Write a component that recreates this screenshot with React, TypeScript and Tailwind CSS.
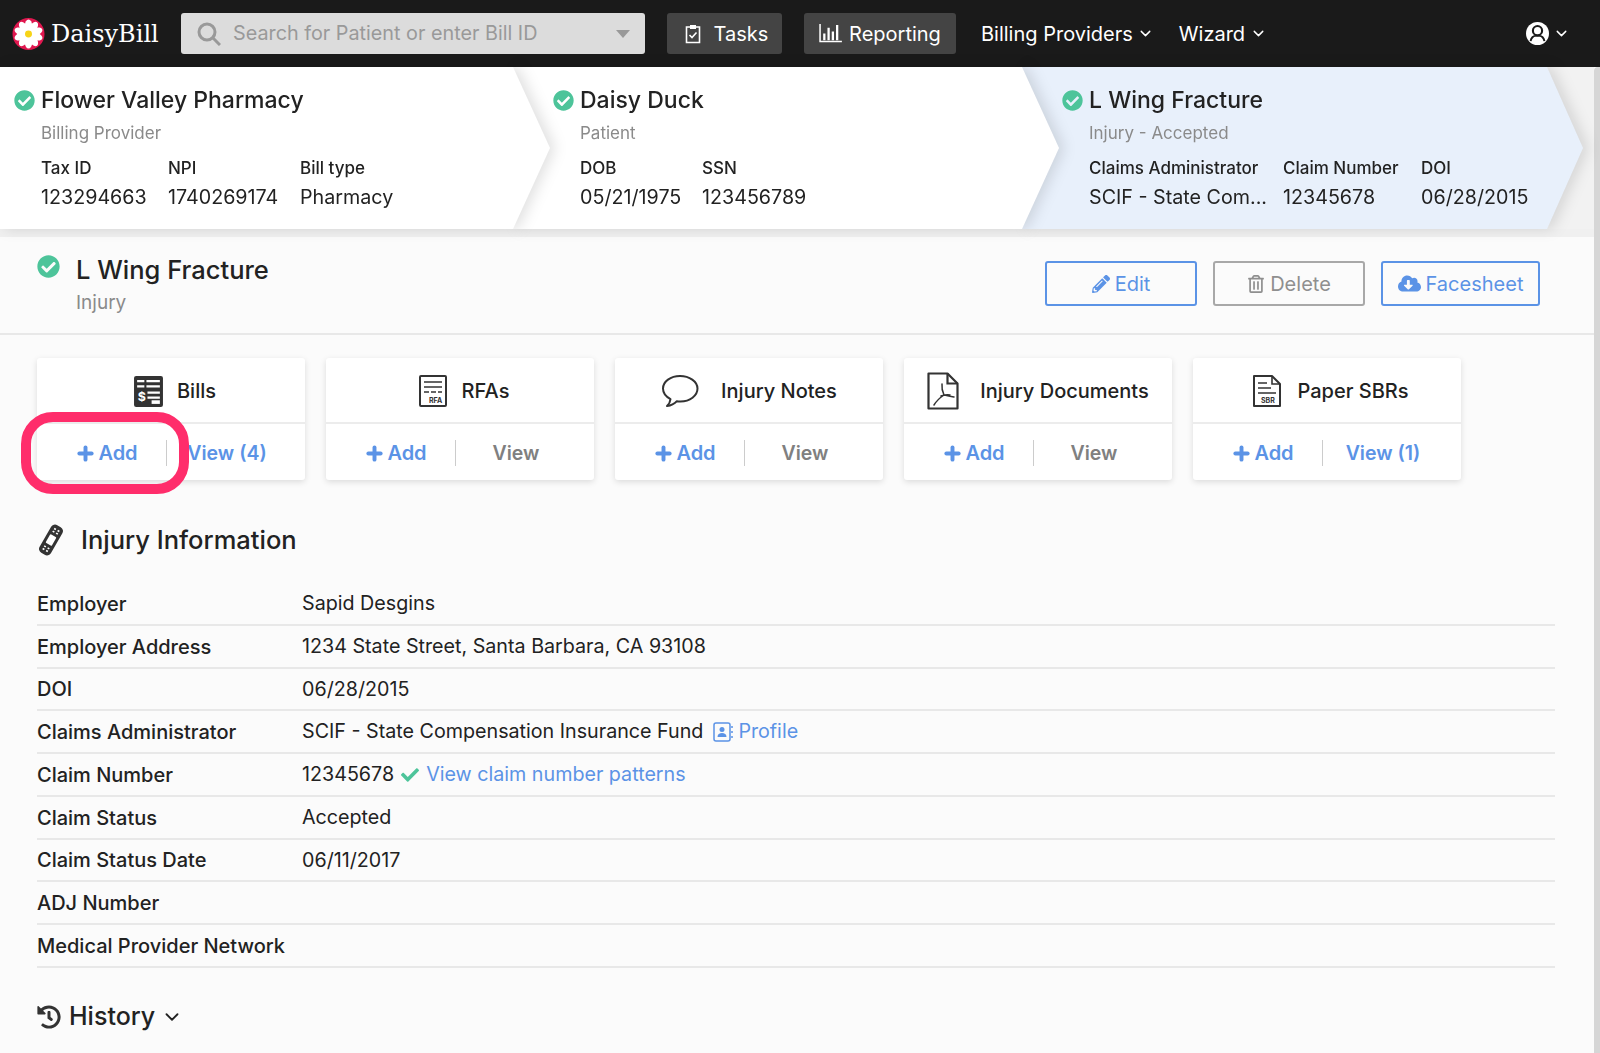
import { ChevronDown, Plus } from 'lucide-react';
import { FaCheckCircle, FaCheck, FaPencilAlt, FaCloudDownloadAlt, FaRegTrashAlt, FaHistory } from 'react-icons/fa';
import { ReactNode } from 'react';

function Daisy() {
  const petals = [0, 36, 72, 108, 144, 180, 216, 252, 288, 324];
  return (
    <svg viewBox="0 0 34 34" className="h-[34px] w-[33px]">
      <circle cx="17" cy="17" r="16.5" fill="#e0174f" />
      {petals.map((a) => (
        <ellipse key={a} cx="17" cy="8.5" rx="3.8" ry="6.5" fill="#fff" transform={`rotate(${a} 17 17)`} />
      ))}
      <circle cx="17" cy="17" r="3.6" fill="#f7d417" />
    </svg>
  );
}

function BillsIcon() {
  return (
    <svg viewBox="0 0 28 30" className="h-[31px] w-[29px]">
      <rect width="28" height="30" rx="2" fill="#333" />
      <path d="M3 5h7M12 5h13M3 10h7M12 10h13M13 16h12M13 21h12" stroke="#fff" strokeWidth="2.2" />
      <rect x="17" y="23.500" width="8" height="3.500" fill="#fff" />
      <text x="3.500" y="24" fontSize="12" fontWeight="700" fill="#fff" fontFamily="Inter, sans-serif">$</text>
    </svg>
  );
}

function RfaIcon() {
  return (
    <svg viewBox="0 0 28 32" className="h-[32px] w-[28px]" fill="none">
      <rect x="1" y="1" width="26" height="30" rx="1" stroke="#333" strokeWidth="2" />
      <path d="M5 7h18M5 12h18" stroke="#333" strokeWidth="1.6" />
      <path d="M5 17h5M12 17h5M19 17h4" stroke="#333" strokeWidth="1.6" />
      <text x="10" y="28" fontSize="7" fontWeight="700" fill="#333" fontFamily="Inter, sans-serif">RFA</text>
    </svg>
  );
}

function NoteIcon() {
  return (
    <svg viewBox="0 0 38 34" className="h-[34px] w-[38px]" fill="none">
      <path d="M19 2C9.6 2 2 7.6 2 14.6c0 4.4 3 8.2 7.500 10.500-.3 2.500-1.300 5-3.500 7 3.800-.6 7.400-2.300 9.800-4.800 1.200.2 2.400.3 3.700.3 9.400 0 17-5.800 17-13S28.400 2 19 2z" stroke="#333" strokeWidth="2" strokeLinejoin="round" />
    </svg>
  );
}

function PdfIcon() {
  return (
    <svg viewBox="0 0 32 38" className="h-[38px] w-[32px]" fill="none">
      <path d="M1.500 1.500h19l10 10v25h-29z" stroke="#333" strokeWidth="2.200" strokeLinejoin="round" />
      <path d="M20.500 1.500v10h10" stroke="#333" strokeWidth="2.200" />
      <path d="M15 12c-.5 5 .5 8 2 11M17 23c-3 2-7 5-10 10M17 23c3 .5 6 1.500 10 2M14 24c3-1 6-1.500 9-1" stroke="#333" strokeWidth="1.500" strokeLinecap="round" />
    </svg>
  );
}

function SbrIcon() {
  return (
    <svg viewBox="0 0 28 32" className="h-[32px] w-[28px]" fill="none">
      <path d="M1 1h18l8 8v22H1z" stroke="#333" strokeWidth="2" strokeLinejoin="round" />
      <path d="M19 1v8h8" stroke="#333" strokeWidth="1.600" />
      <path d="M5 8h9M5 13h13M5 18h18" stroke="#333" strokeWidth="1.700" />
      <text x="8" y="28" fontSize="7" fontWeight="700" fill="#333" fontFamily="Inter, sans-serif">SBR</text>
    </svg>
  );
}

function BandageIcon() {
  return (
    <svg viewBox="0 0 28 32" className="h-[32px] w-[28px]">
      <g transform="rotate(30 14 16)">
        <rect x="7.500" y="0" width="13" height="32" rx="4.500" fill="#333" />
        <rect x="10.500" y="11" width="7" height="10" rx="1" fill="#fff" />
        <path d="M11 4.500h2M15 4.500h2M11 7.500h2M15 7.500h2M11 24.500h2M15 24.500h2M11 27.500h2M15 27.500h2" stroke="#fff" strokeWidth="1.600" />
      </g>
    </svg>
  );
}

function TaskIcon() {
  return (
    <svg viewBox="0 0 16 20" className="h-[20px] w-[16px]" fill="none" stroke="#fff" strokeWidth="1.600">
      <path d="M5 3H1.500v15.500h13V3H11" />
      <rect x="5" y="1" width="6" height="4" fill="#fff" stroke="none" />
      <path d="M4.500 11l2.500 2.500 4.500-5" />
    </svg>
  );
}

function ReportIcon() {
  return (
    <svg viewBox="0 0 24 20" className="h-[19px] w-[23px]" fill="none" stroke="#fff">
      <path d="M1 0v18.500h23" strokeWidth="1.600" />
      <path d="M5.500 17V10M10 17V4M14.500 17V8M19 17V1" strokeWidth="2.400" />
    </svg>
  );
}

function ProfileIcon() {
  return (
    <svg viewBox="0 0 20 20" className="h-[20px] w-[20px]" fill="none">
      <rect x="1" y="1" width="16" height="18" rx="2" stroke="#5b93e6" strokeWidth="1.500" />
      <circle cx="9" cy="7.500" r="2.500" fill="#5b93e6" />
      <path d="M4.500 15c0-3 2-4 4.500-4s4.500 1 4.500 4z" fill="#5b93e6" />
      <path d="M19 4v2M19 9v2M19 14v2" stroke="#5b93e6" strokeWidth="1.500" />
    </svg>
  );
}

function UserIcon() {
  return (
    <svg viewBox="0 0 24 24" className="size-[23px]">
      <circle cx="12" cy="12" r="12" fill="#fff" />
      <circle cx="12" cy="9" r="4.800" fill="#fff" stroke="#1a1a1a" strokeWidth="2.200" />
      <path d="M4.800 20c.5-3.500 3-5.500 4.700-5.500h5c1.700 0 4.200 2 4.700 5.500" fill="none" stroke="#1a1a1a" strokeWidth="2" />
    </svg>
  );
}

type CrumbProps = {
  title: string;
  sub: string;
  cols: [string, string, string][];
  shape: string;
  className: string;
};

// the drop-shadow sits on a wrapper, clip-path would cut it off otherwise
function Crumb({ title, sub, cols, shape, className }: CrumbProps) {
  return (
    <div className={`relative h-full drop-shadow-[5px_0_7px_rgba(0,0,0,0.12)] ${className}`}>
      <div className={`relative h-full pt-[19px] ${shape}`}>
        <div className="flex items-center text-[23px] font-medium leading-[28px] text-[#222]">
          <FaCheckCircle className="mr-[6px] text-[21px] text-[#4dc49a]" />
          {title}
        </div>
        <div className="ml-[27px] mt-[8px] text-[17px] leading-[22px] text-[#8a8a8a]">{sub}</div>
        <div className="ml-[27px] mt-[13px] flex">
          {cols.map(([label, value, w]) => (
            <div key={label} className={w}>
              <div className="text-[17px] font-medium leading-[22px] text-[#222]">{label}</div>
              <div className="mt-[5px] whitespace-nowrap text-[19.700px] leading-[26px] text-[#222]">{value}</div>
            </div>
          ))}
        </div>
      </div>
    </div>
  );
}

function Card({ icon, title, view, viewActive, head }: { icon: ReactNode; title: string; view: string; viewActive?: boolean; head: string }) {
  return (
    <div className="h-[122px] w-[268px] rounded-[3px] bg-white shadow-[0_2px_6px_rgba(0,0,0,0.13)]">
      <div className={`flex h-[66px] items-center justify-center border-b-2 border-[#ececec] pt-[2px] text-[20px] font-medium text-[#222] ${head}`}>
        {icon}
        <span>{title}</span>
      </div>
      <div className="flex h-[56px] items-center pt-[2px] text-[20px] font-semibold">
        <div className="flex h-[26px] w-[130px] items-center justify-center gap-[2px] border-r border-[#ccc] pl-[10px] text-[#5b93e6]">
          <Plus className="size-[21px]" strokeWidth={4.500} />
          Add
        </div>
        <div className={`flex-1 pr-[18px] pt-[1px] text-center text-[19.500px] ${viewActive ? 'text-[#5b93e6]' : 'text-[#808080]'}`}>{view}</div>
      </div>
    </div>
  );
}

function Row({ label, children }: { label: string; children?: ReactNode }) {
  return (
    <div className="flex h-[42.750px] items-center border-b-2 border-[#e8e8e8] pt-[1px] text-[19.700px]">
      <div className="w-[265px] whitespace-nowrap text-[20px] font-medium text-[#222]">{label}</div>
      <div className="flex items-center text-[#222]">{children}</div>
    </div>
  );
}

function ActionBtn({ children, gray, width }: { children: ReactNode; gray?: boolean; width: string }) {
  return (
    <div className={`flex h-[45px] items-center justify-center gap-[5px] rounded-[3px] border-2 text-[20px] ${width} ${gray ? 'border-[#a8a8a8] text-[#8f8f8f]' : 'border-[#5b93e6] text-[#5b93e6]'}`}>
      {children}
    </div>
  );
}

export default function App() {
  return (
    <div className="relative h-[1053px] w-[1600px] overflow-hidden bg-[#fbfbfb] font-['Inter',sans-serif]">
      <header className="flex h-[67px] items-center bg-[#1a1a1a] text-white">
        <div className="ml-[12px]"><Daisy /></div>
        <div className="ml-[6px] w-[130px] font-['DejaVu_Serif',serif] text-[24px]">DaisyBill</div>
        <div className="flex h-[41px] w-[464px] items-center rounded-[3px] bg-[#dcdcdc] pl-[16px] text-[19.800px] text-[#999]">
          <svg viewBox="0 0 24 24" className="size-[24px]" fill="none" stroke="#999" strokeWidth="3">
            <circle cx="10" cy="10" r="8" />
            <path d="M16 16l7 7" />
          </svg>
          <span className="ml-[12px] flex-1">Search for Patient or enter Bill ID</span>
          <span className="mr-[15px] h-0 w-0 border-x-[7px] border-t-[8px] border-x-transparent border-t-[#999]" />
        </div>
        <div className="ml-[22px] flex h-[41px] w-[115px] items-center justify-center gap-[13px] rounded-[3px] bg-[#444] pl-[4px] text-[20px]">
          <TaskIcon />
          Tasks
        </div>
        <div className="ml-[22px] flex h-[41px] w-[152px] items-center justify-center gap-[7px] rounded-[3px] bg-[#444] text-[20px]">
          <ReportIcon />
          Reporting
        </div>
        <div className="ml-[25px] flex items-center gap-[4px] text-[20px]">Billing Providers<ChevronDown className="size-[17px]" /></div>
        <div className="ml-[25px] flex items-center gap-[5px] text-[20px]">Wizard<ChevronDown className="size-[17px]" /></div>
        <div className="ml-auto mr-[30px] flex items-center gap-[4px]">
          <UserIcon />
          <ChevronDown className="size-[17px]" />
        </div>
      </header>

      <div className="flex h-[162px] w-[1594px] bg-[#f2f2f2]">
        <Crumb
          title="Flower Valley Pharmacy"
          sub="Billing Provider"
          className="z-30 w-[550px] shrink-0"
          shape="bg-white pl-[14px] [clip-path:polygon(0_0,513px_0,550px_50%,513px_100%,0_100%)]"
          cols={[['Tax ID', '123294663', 'w-[127px]'], ['NPI', '1740269174', 'w-[132px]'], ['Bill type', 'Pharmacy', 'w-[150px]']]}
        />
        <Crumb
          title="Daisy Duck"
          sub="Patient"
          className="z-20 -ml-[37px] w-[546px] shrink-0"
          shape="bg-white pl-[40px] [clip-path:polygon(0_0,509px_0,546px_50%,509px_100%,0_100%)]"
          cols={[['DOB', '05/21/1975', 'w-[122px]'], ['SSN', '123456789', 'w-[150px]']]}
        />
        <Crumb
          title="L Wing Fracture"
          sub="Injury - Accepted"
          className="z-10 -ml-[37px] w-[561px] shrink-0"
          shape="bg-[#e8f0fb] pl-[40px] [clip-path:polygon(0_0,525px_0,561px_50%,525px_100%,0_100%)]"
          cols={[['Claims Administrator', 'SCIF - State Com...', 'w-[194px]'], ['Claim Number', '12345678', 'w-[138px]'], ['DOI', '06/28/2015', 'w-[120px]']]}
        />
      </div>
      <div className="h-[8px] bg-[#f0f0f0]" />

      <section className="flex h-[98px] border-b-2 border-[#e8e8e8]">
        <FaCheckCircle className="ml-[37px] mt-[18px] text-[23px] text-[#4dc49a]" />
        <div className="pl-[16px] pt-[18px]">
          <div className="text-[25.500px] font-medium leading-[30px] text-[#222]">L Wing Fracture</div>
          <div className="mt-[6px] text-[19px] leading-[24px] text-[#8a8a8a]">Injury</div>
        </div>
        <div className="ml-auto mr-[60px] mt-[24px] flex gap-[16px]">
          <ActionBtn width="w-[152px]"><FaPencilAlt className="text-[18px]" />Edit</ActionBtn>
          <ActionBtn width="w-[152px]" gray><FaRegTrashAlt className="text-[18px]" />Delete</ActionBtn>
          <ActionBtn width="w-[159px]"><FaCloudDownloadAlt className="text-[23px]" />Facesheet</ActionBtn>
        </div>
      </section>

      <div className="px-[37px]">
        <div className="mt-[23px] flex gap-[21px]">
          <div className="relative">
            <Card icon={<BillsIcon />} title="Bills" view="View (4)" viewActive head="gap-[14px] pl-[8px]" />
            <div className="absolute left-[-16px] top-[54px] h-[82px] w-[168px] rounded-[32px] border-[10px] border-[#ff2d6b]" />
          </div>
          <Card icon={<RfaIcon />} title="RFAs" view="View" head="gap-[15px] pl-[8px]" />
          <Card icon={<NoteIcon />} title="Injury Notes" view="View" head="gap-[22px]" />
          <Card icon={<PdfIcon />} title="Injury Documents" view="View" head="gap-[21px]" />
          <Card icon={<SbrIcon />} title="Paper SBRs" view="View (1)" viewActive head="gap-[16px] pl-[8px]" />
        </div>

        <div className="mt-[36px] flex h-[48px] items-center gap-[16px] text-[25.500px] font-medium text-[#222]">
          <BandageIcon />
          Injury Information
        </div>

        <div className="mt-[19px] w-[1518px]">
          <Row label="Employer">Sapid Desgins</Row>
          <Row label="Employer Address">1234 State Street, Santa Barbara, CA 93108</Row>
          <Row label="DOI">06/28/2015</Row>
          <Row label="Claims Administrator">
            SCIF - State Compensation Insurance Fund
            <span className="ml-[10px]"><ProfileIcon /></span>
            <span className="ml-[5px] text-[#5b93e6]">Profile</span>
          </Row>
          <Row label="Claim Number">
            12345678
            <FaCheck className="ml-[7px] text-[18px] text-[#4dc49a]" />
            <span className="ml-[7px] text-[#5b93e6]">View claim number patterns</span>
          </Row>
          <Row label="Claim Status">Accepted</Row>
          <Row label="Claim Status Date">06/11/2017</Row>
          <Row label="ADJ Number" />
          <Row label="Medical Provider Network" />
        </div>

        <div className="mt-[30px] flex items-center text-[25px] font-medium text-[#222]">
          <FaHistory className="mr-[8px] text-[24px] text-[#333]" />
          History
          <ChevronDown className="ml-[6px] size-[22px]" />
        </div>
      </div>

      {/* scrollbar strip down the right edge */}
      <div className="absolute bottom-0 right-0 top-[67px] w-[6px] rounded-tl-[4px] bg-[#d6d6d6]" />
    </div>
  );
}
